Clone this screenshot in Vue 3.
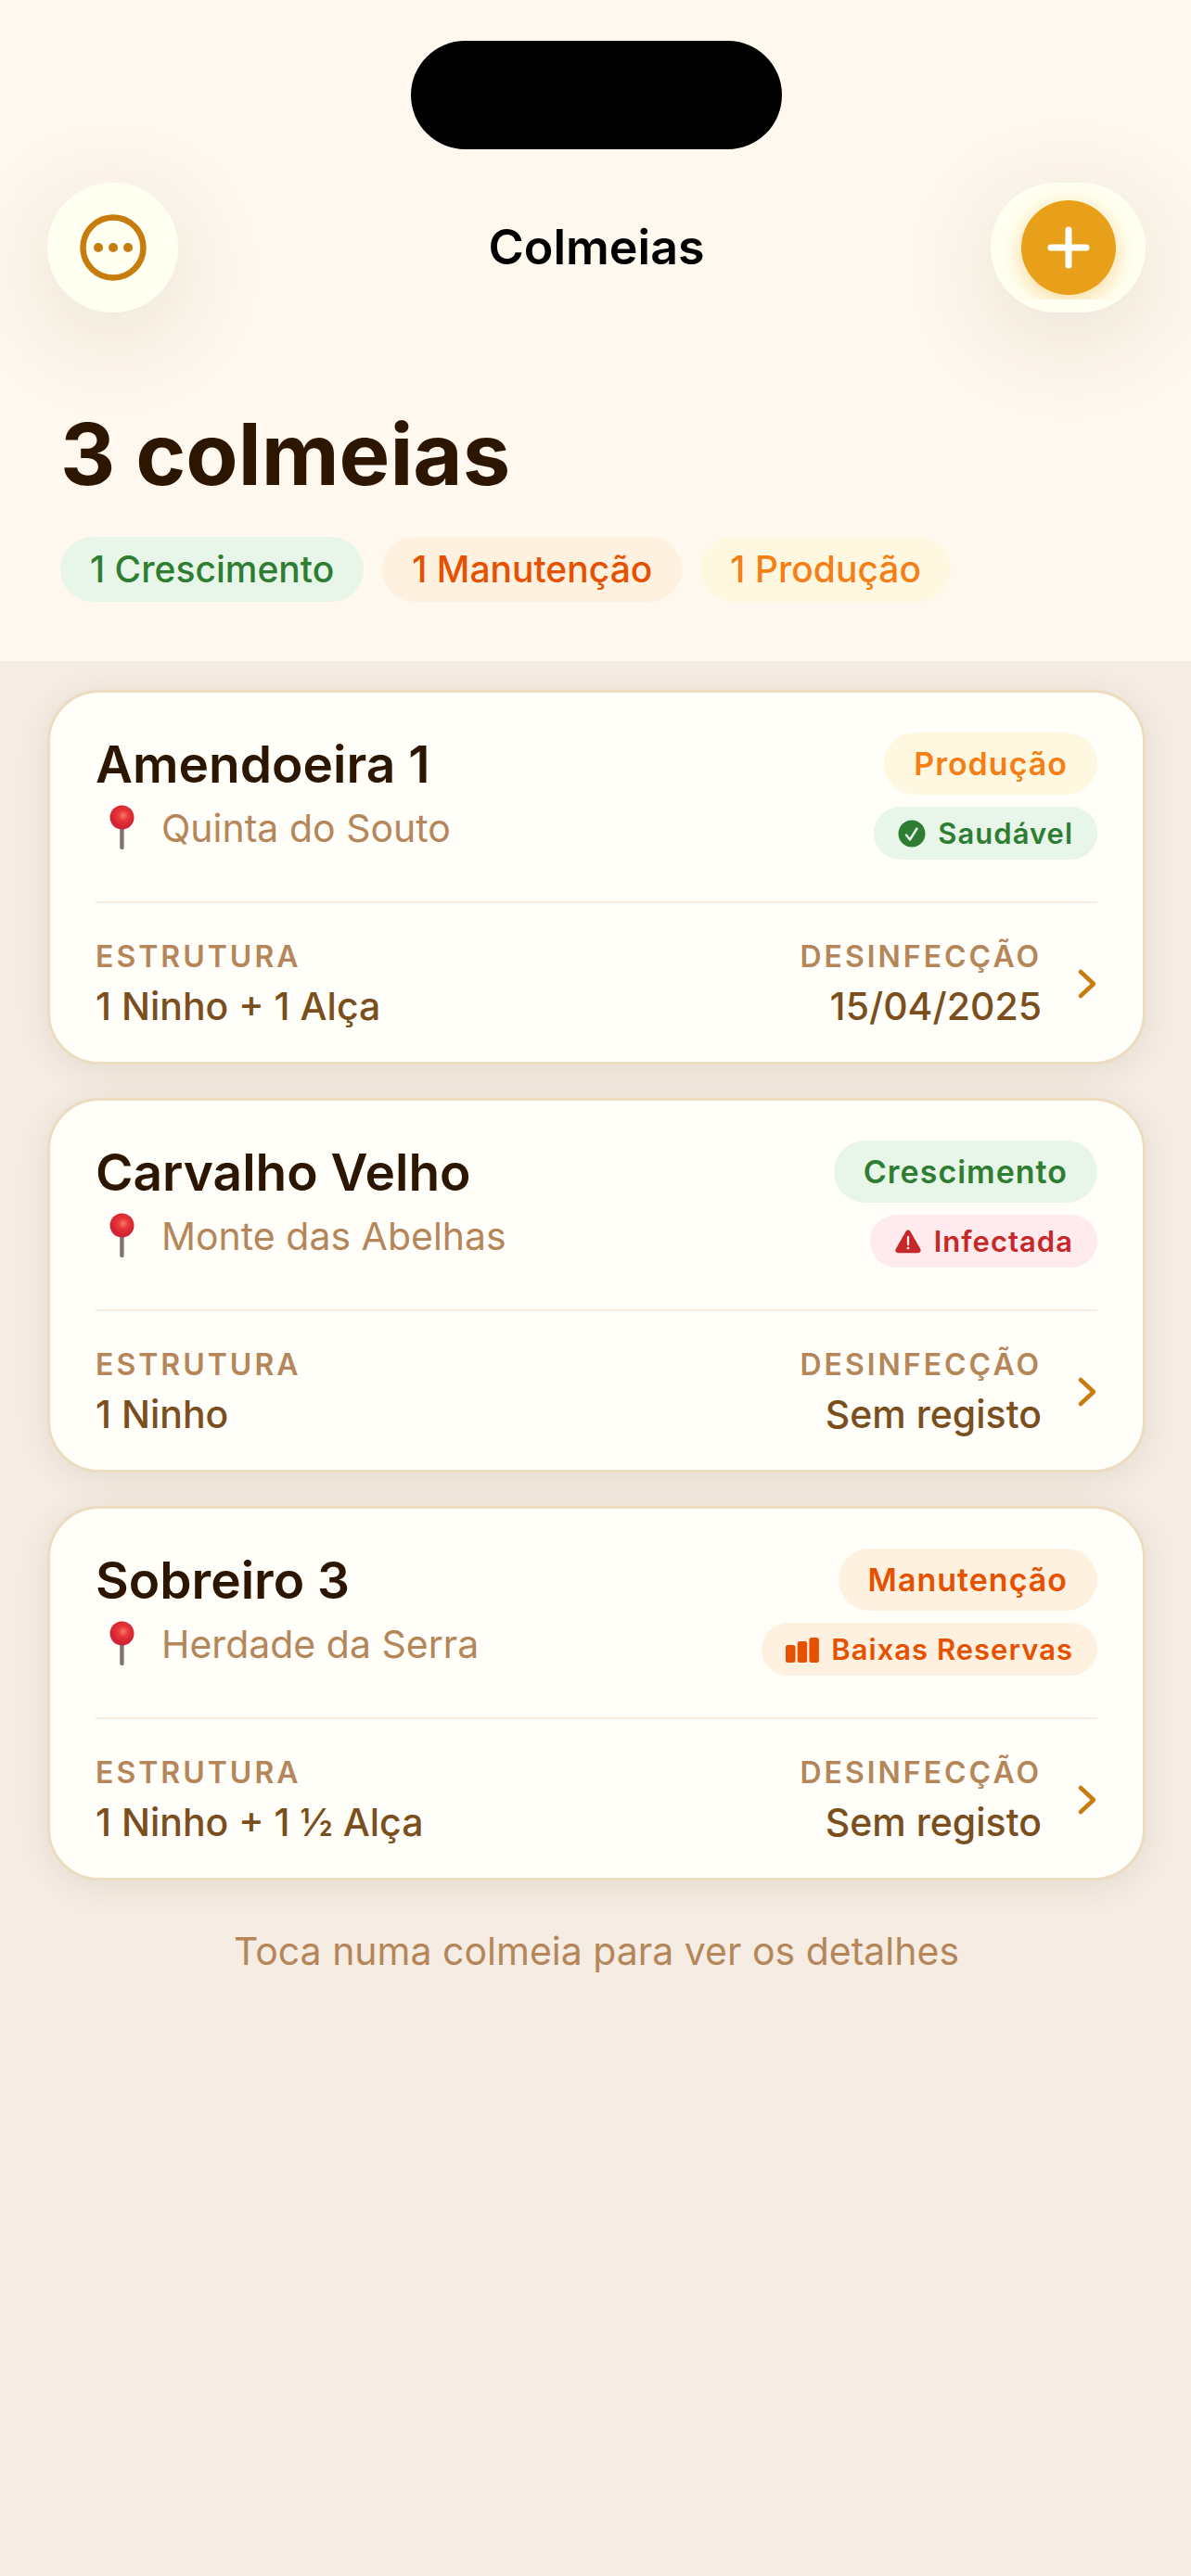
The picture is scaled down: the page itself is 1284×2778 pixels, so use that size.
<script setup>
const summary = [
  { label: '1 Crescimento', tone: 'green' },
  { label: '1 Manutenção', tone: 'orange' },
  { label: '1 Produção', tone: 'amber' },
]

const hives = [
  {
    id: 1,
    name: 'Amendoeira 1',
    place: 'Quinta do Souto',
    phase: { label: 'Produção', tone: 'amber' },
    health: { label: 'Saudável', tone: 'green', icon: 'check' },
    structure: '1 Ninho + 1 Alça',
    treated: '15/04/2025',
  },
  {
    id: 2,
    name: 'Carvalho Velho',
    place: 'Monte das Abelhas',
    phase: { label: 'Crescimento', tone: 'green' },
    health: { label: 'Infectada', tone: 'red', icon: 'alert' },
    structure: '1 Ninho',
    treated: 'Sem registo',
  },
  {
    id: 3,
    name: 'Sobreiro 3',
    place: 'Herdade da Serra',
    phase: { label: 'Manutenção', tone: 'orange' },
    health: { label: 'Baixas Reservas', tone: 'orange', icon: 'bars' },
    structure: '1 Ninho + 1 ½ Alça',
    treated: 'Sem registo',
  },
]
</script>

<template>
  <div class="screen">
    <header class="header">
      <div class="island"></div>
      <nav class="nav">
        <button class="round" type="button" aria-label="Mais opções">
          <svg width="72" height="72" viewBox="0 0 72 72" fill="#c77c0e">
            <circle cx="36" cy="36" r="32.5" fill="none" stroke="#c77c0e" stroke-width="6.5" />
            <circle cx="20" cy="36" r="5" />
            <circle cx="36" cy="36" r="5" />
            <circle cx="52" cy="36" r="5" />
          </svg>
        </button>
        <h1 class="nav-title">Colmeias</h1>
        <button class="round wide" type="button" aria-label="Adicionar colmeia">
          <span class="add">
            <svg width="46" height="46" viewBox="0 0 46 46" fill="none" stroke="#fff" stroke-width="7" stroke-linecap="round">
              <path d="M23 4v38M4 23h38" />
            </svg>
          </span>
        </button>
      </nav>
      <div class="hero">
        <h2 class="count">3 colmeias</h2>
        <ul class="summary">
          <li v-for="s in summary" :key="s.label" class="chip" :class="s.tone">{{ s.label }}</li>
        </ul>
      </div>
    </header>

    <main class="content">
      <ul class="list">
        <li v-for="h in hives" :key="h.id">
          <a class="card" :href="'#colmeia-' + h.id">
            <div class="top">
              <div class="who">
                <h3 class="name">{{ h.name }}</h3>
                <p class="place">
                  <svg class="pin" width="57" height="50" viewBox="0 0 57 50">
                    <defs>
                      <radialGradient :id="'head' + h.id" cx="0.55" cy="0.42" r="0.6">
                        <stop offset="0" stop-color="#fb7a6c" />
                        <stop offset="0.35" stop-color="#e8383a" />
                        <stop offset="0.8" stop-color="#d3222f" />
                        <stop offset="1" stop-color="#b8304a" />
                      </radialGradient>
                      <linearGradient :id="'needle' + h.id" x1="0" x2="1">
                        <stop offset="0" stop-color="#a39a98" />
                        <stop offset="0.5" stop-color="#6f6563" />
                        <stop offset="1" stop-color="#b5aca9" />
                      </linearGradient>
                    </defs>
                    <rect x="26" y="24" width="5" height="24" rx="2" :fill="`url(#needle${h.id})`" />
                    <circle cx="28.500" cy="13.500" r="13" :fill="`url(#head${h.id})`" />
                  </svg>
                  <span>{{ h.place }}</span>
                </p>
              </div>
              <div class="tags">
                <span class="tag" :class="h.phase.tone">{{ h.phase.label }}</span>
                <span class="tag small" :class="h.health.tone">
                  <svg v-if="h.health.icon === 'check'" width="30" height="30" viewBox="0 0 30 30">
                    <circle cx="15" cy="15" r="14.5" fill="currentColor" />
                    <path d="M9 16.500l4 5L20.500 9.500" fill="none" stroke="#e8f5e9" stroke-width="2.400" stroke-linecap="round" stroke-linejoin="round" />
                  </svg>
                  <svg v-else-if="h.health.icon === 'alert'" width="30" height="30" viewBox="0 0 32 30">
                    <path d="M13.400 3.200a3 3 0 0 1 5.200 0l11.600 20.300a3 3 0 0 1-2.600 4.500H4.400a3 3 0 0 1-2.600-4.500z" fill="currentColor" />
                    <path d="M16 9.500v9" stroke="#ffebee" stroke-width="2.400" stroke-linecap="round" />
                    <circle cx="16" cy="22.500" r="1.500" fill="#ffebee" />
                  </svg>
                  <svg v-else width="36" height="30" viewBox="0 0 36 30" fill="currentColor">
                    <rect x="0" y="10" width="10.500" height="19" rx="2.500" />
                    <rect x="12.700" y="6" width="10.500" height="23" rx="2.500" />
                    <rect x="25.400" y="2" width="10.500" height="27" rx="2.500" />
                  </svg>
                  <span>{{ h.health.label }}</span>
                </span>
              </div>
            </div>
            <div class="bottom">
              <dl class="fact">
                <dt>ESTRUTURA</dt>
                <dd>{{ h.structure }}</dd>
              </dl>
              <dl class="fact end">
                <dt>DESINFECÇÃO</dt>
                <dd>{{ h.treated }}</dd>
              </dl>
              <svg class="chevron" width="22" height="34" viewBox="0 0 22 34" fill="none" stroke="#c77c0e" stroke-width="4.500" stroke-linecap="round" stroke-linejoin="round">
                <path d="M4 4l14 13L4 30" />
              </svg>
            </div>
          </a>
        </li>
      </ul>
      <p class="hint">Toca numa colmeia para ver os detalhes</p>
    </main>
  </div>
</template>

<style>
body {
  background: #f5ede3;
}
</style>

<style scoped>
.screen {
  min-height: 100vh;
  background: #f5ede3;
  color: #2d1600;
  font-family: Inter, "Liberation Sans", sans-serif;
}
h1, h2, h3, p, ul, dl, dd {
  margin: 0;
  padding: 0;
}
ul {
  list-style: none;
}
svg {
  display: block;
  flex: none;
}
.header {
  position: relative;
  z-index: 1;
  padding: 44px 49px 64px 51px;
  background: #fff8ee;
}
.island {
  width: 400px;
  height: 117px;
  margin: 0 auto 36px;
  border-radius: 59px;
  background: #000;
}
.nav {
  display: grid;
  grid-template-columns: 1fr auto 1fr;
  align-items: center;
}
.round {
  display: flex;
  align-items: center;
  justify-content: center;
  width: 141px;
  height: 140px;
  padding: 0;
  border: 0;
  border-radius: 70px;
  background: #fffff2;
  box-shadow: 0 24px 108px rgba(60, 40, 20, 0.12);
}
.wide {
  width: 167px;
  justify-self: end;
}
.add {
  display: flex;
  align-items: center;
  justify-content: center;
  width: 102px;
  height: 102px;
  border-radius: 51px;
  background: #e8a01a;
  box-shadow: 0 6px 24px rgba(232, 160, 26, 0.4);
  clip-path: inset(-18px -30px -5px);
}
.nav-title {
  color: #000;
  font-size: 52px;
  font-weight: 600;
  line-height: 60px;
}
.hero {
  padding: 94px 14px 0;
}
.count {
  font-size: 92px;
  font-weight: 700;
  line-height: 118px;
}
.summary {
  display: flex;
  gap: 20px;
  margin-top: 30px;
}
.chip {
  padding: 0 32px;
  border-radius: 35px;
  font-size: 39px;
  font-weight: 500;
  line-height: 70px;
}
.green {
  background: #e8f5e9;
  color: #2e7d32;
}
.orange {
  background: #fff1e0;
  color: #e65100;
}
.amber {
  background: #fff8e1;
  color: #f57f17;
}
.red {
  background: #ffebee;
  color: #c62828;
}
.content {
  padding: 31px 49px 0 51px;
}
.list {
  display: flex;
  flex-direction: column;
  gap: 36px;
}
.card {
  display: block;
  padding: 43px 49px 35px;
  border: 3px solid #ecdcc2;
  border-radius: 56px;
  background: #fffef9;
  box-shadow: 0 6px 36px rgba(60, 30, 0, 0.09);
  color: inherit;
  text-decoration: none;
}
.top {
  display: flex;
  justify-content: space-between;
  padding-bottom: 45px;
  border-bottom: 2px solid #f8ecdf;
}
.name {
  font-size: 55px;
  font-weight: 600;
  line-height: 68px;
}
.place {
  display: flex;
  gap: 14px;
  margin-top: 10px;
  color: #b5865a;
  font-size: 41px;
  line-height: 50px;
}
.tags {
  display: flex;
  flex-direction: column;
  align-items: flex-end;
  gap: 13px;
}
.tag {
  padding: 0 32px;
  border-radius: 34px;
  font-size: 34px;
  font-weight: 600;
  letter-spacing: 1px;
  line-height: 67px;
}
.small {
  display: flex;
  align-items: center;
  gap: 13px;
  padding: 0 26px;
  font-size: 31px;
  line-height: 57px;
}
.bottom {
  display: flex;
  align-items: center;
  padding-top: 38px;
}
.fact dt {
  color: #b5865a;
  font-size: 32px;
  font-weight: 600;
  letter-spacing: 3px;
  line-height: 40px;
}
.fact dd {
  margin-top: 8px;
  color: #7a4e1d;
  font-size: 41px;
  font-weight: 500;
  line-height: 50px;
}
.end {
  margin-left: auto;
  text-align: right;
}
.chevron {
  margin-left: 38px;
}
.hint {
  margin-top: 51px;
  color: #b5865a;
  font-size: 41px;
  line-height: 50px;
  text-align: center;
}
</style>
